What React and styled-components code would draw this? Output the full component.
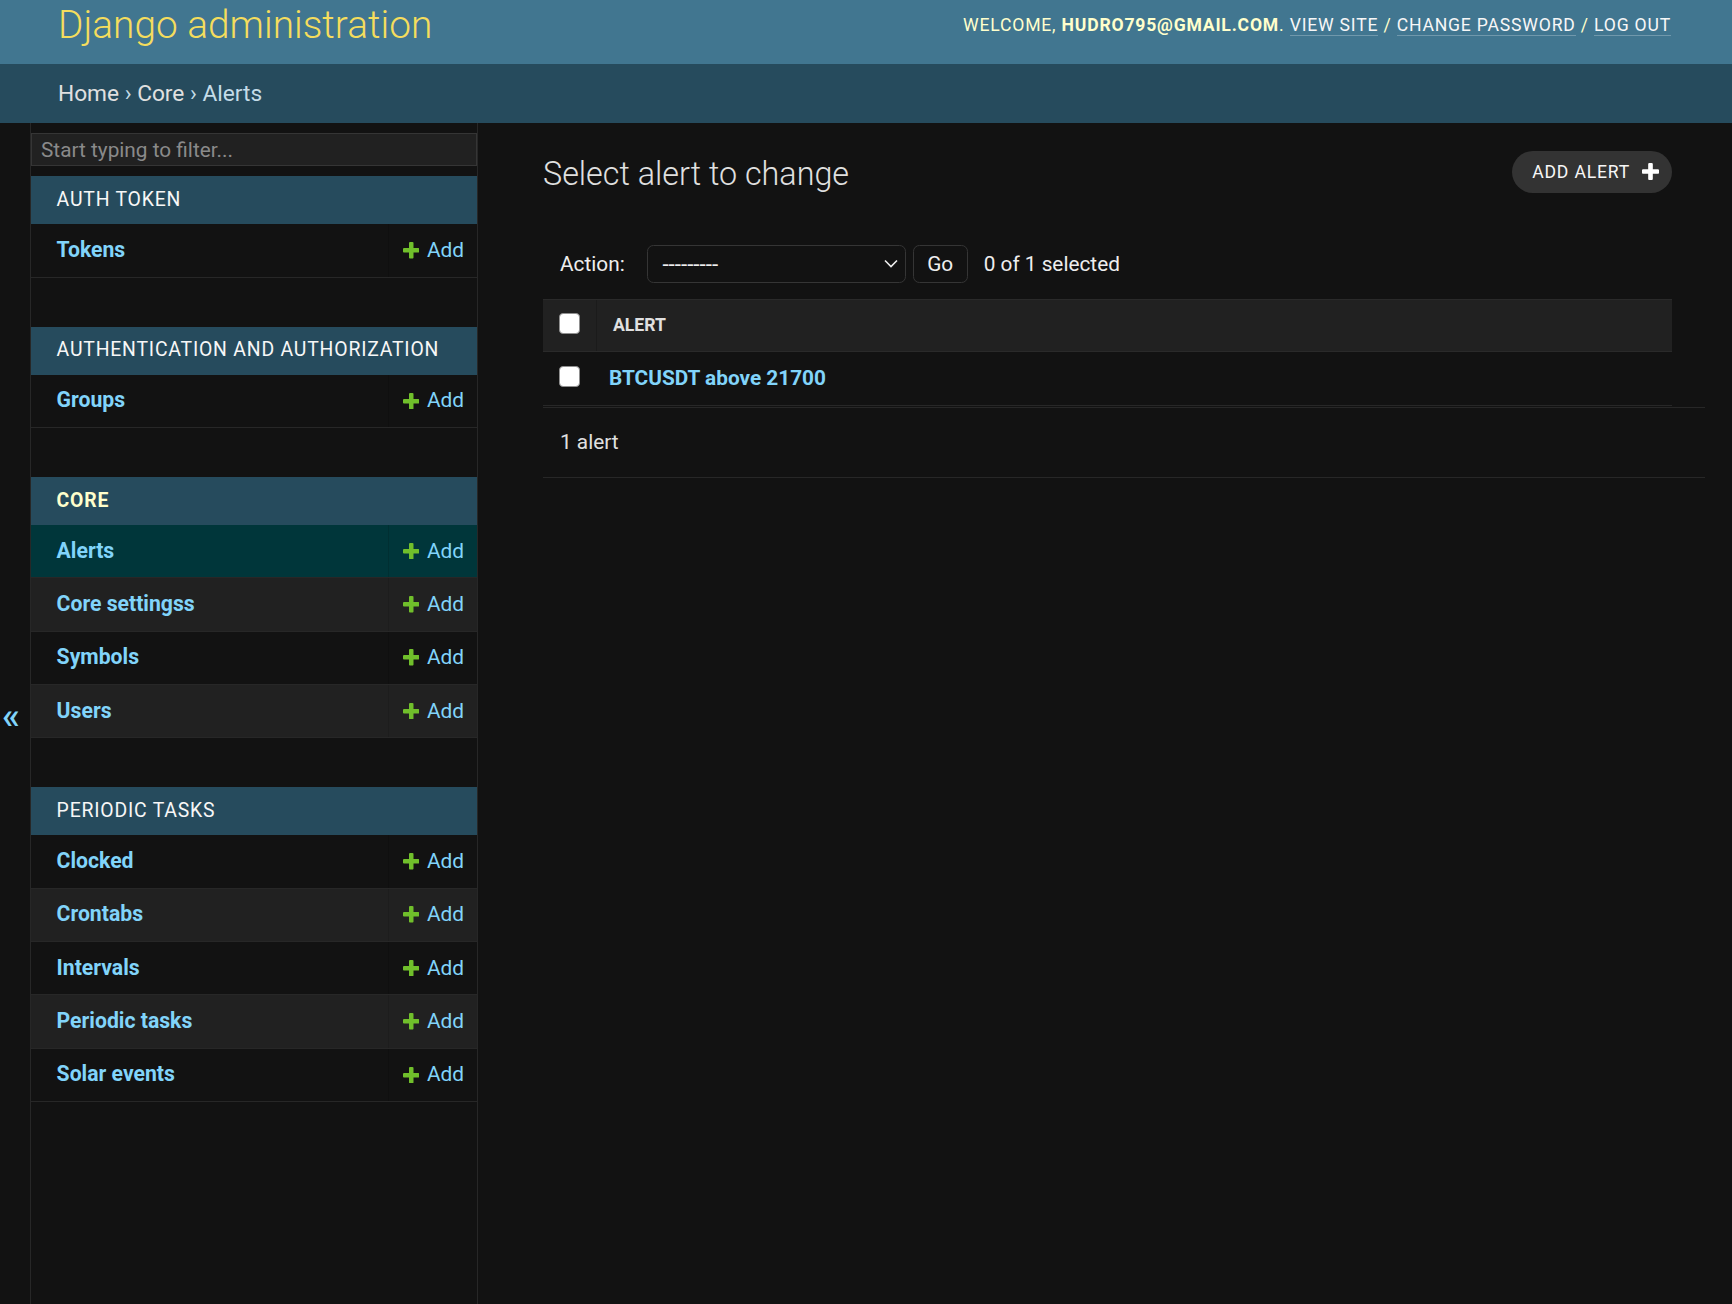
import React from 'react';
import styled, { createGlobalStyle } from 'styled-components';

const GlobalStyle = createGlobalStyle`
  html, body { margin: 0; padding: 0; background: #121212; }
  body {
    font-family: Roboto, "Liberation Sans", Arial, sans-serif;
    color: #eeeeee;
    -webkit-font-smoothing: antialiased;
  }
  *, *::before, *::after { box-sizing: border-box; }
  #root { min-height: 100vh; }
`;

const Page = styled.div`
  display: flex;
  flex-direction: column;
  min-height: 100vh;
`;

const Header = styled.header`
  display: flex;
  justify-content: space-between;
  align-items: flex-start;
  flex-shrink: 0;
  height: 64px;
  padding: 2px 61px 0 58px;
  background: #417690;
`;

const Branding = styled.h1`
  margin: 0;
  font-size: 38.8px;
  font-weight: 300;
  line-height: 45px;
  color: #f5dd5d;
  white-space: nowrap;
`;

const UserTools = styled.div`
  margin-top: 12.7px;
  font-size: 17.6px;
  line-height: 20.6px;
  letter-spacing: 0.8px;
  text-transform: uppercase;
  color: #ffffcc;
  white-space: nowrap;

  strong { font-weight: 700; }
`;

const UserLink = styled.a`
  color: #f7f7f7;
  text-decoration: none;
  border-bottom: 1px solid rgba(255, 255, 255, 0.25);
`;

const Breadcrumbs = styled.nav`
  display: flex;
  align-items: center;
  flex-shrink: 0;
  height: 59px;
  padding: 0 58px;
  background: #264b5d;
  color: #c4dce8;
  font-size: 22.7px;
  white-space: pre;
`;

const Crumb = styled.a`
  color: #e0e0e0;
  text-decoration: none;
`;

const Main = styled.div`
  display: flex;
  flex: 1;
`;

const Toggle = styled.button`
  flex: 0 0 31px;
  display: flex;
  align-items: center;
  justify-content: flex-start;
  padding: 4px 0 0 2px;
  border: 0;
  border-right: 1px solid #272727;
  background: #121212;
  color: #81d4fa;
  font-family: inherit;
  font-size: 37px;
  font-weight: 500;
  line-height: 1;
  cursor: pointer;
`;

const Sidebar = styled.nav`
  flex: 0 0 447px;
  padding-top: 10px;
  border-right: 1px solid #272727;
  background: #121212;
`;

const FilterInput = styled.input`
  display: block;
  width: 100%;
  height: 33.4px;
  margin: 0 0 10px;
  padding: 0 9px;
  border: 1px solid #353535;
  background: #212121;
  color: #eeeeee;
  font-family: inherit;
  font-size: 20.8px;
  outline: none;

  &::placeholder { color: #8a8a8a; }
`;

const Module = styled.section`
  margin-bottom: 48.8px;
`;

const Caption = styled.div`
  padding: 12.8px 25.6px;
  background: #264b5d;
  font-size: 19.4px;
  line-height: 22.4px;
  letter-spacing: 0.8px;
  text-transform: uppercase;
  white-space: nowrap;
  color: ${(p) => (p.$current ? '#ffffcc' : '#f7f7f7')};
  font-weight: ${(p) => (p.$current ? 700 : 400)};
`;

const ModelRow = styled.div`
  display: flex;
  height: 53.4px;
  border-bottom: 1px solid #272727;
  font-size: 20.8px;
  line-height: 26.8px;
  background: ${(p) => (p.$current ? '#00363a' : p.$even ? '#212121' : 'transparent')};
`;

const NameCell = styled.div`
  flex: 1;
  display: flex;
  align-items: center;
  padding-left: 25.6px;
`;

const ModelLink = styled.a`
  color: #81d4fa;
  font-size: 21.2px;
  font-weight: 700;
  text-decoration: none;
`;

const AddCell = styled.div`
  flex: 0 0 89px;
  display: flex;
  align-items: center;
  justify-content: flex-end;
  padding-right: 13px;
  border-left: 1px solid rgba(0, 0, 0, 0.12);
`;

const AddLink = styled.a`
  display: inline-flex;
  align-items: center;
  gap: 7.7px;
  color: #81d4fa;
  text-decoration: none;
`;

const Content = styled.main`
  flex: 1;
  min-width: 0;
  padding: 28px 60px 0 65px;
`;

const TitleRow = styled.div`
  display: flex;
  justify-content: space-between;
  align-items: flex-start;
`;

const Title = styled.h1`
  margin: 5px 0 0;
  font-size: 32.3px;
  font-weight: 300;
  line-height: 37.5px;
  color: #e0e0e0;
`;

const AddButton = styled.a`
  display: inline-flex;
  align-items: center;
  gap: 12px;
  height: 41.6px;
  padding: 0 13px 0 20px;
  border-radius: 21px;
  background: #333333;
  color: #f7f7f7;
  font-size: 17.6px;
  letter-spacing: 0.8px;
  text-transform: uppercase;
  text-decoration: none;
`;

const Actions = styled.div`
  display: flex;
  align-items: center;
  margin-top: 35px;
  padding: 16px 17px;
  font-size: 20.8px;
  color: #eeeeee;
`;

const ActionLabel = styled.label`
  margin-right: 22.7px;
`;

const SelectBox = styled.div`
  display: flex;
  align-items: center;
  justify-content: space-between;
  width: 259px;
  height: 38px;
  padding: 0 7px 0 14px;
  border: 1px solid #353535;
  border-radius: 6.4px;
  background: #121212;
  color: #eeeeee;
  font-size: 22.4px;
`;

const GoButton = styled.button`
  width: 55px;
  height: 38px;
  margin-left: 6.3px;
  padding: 0;
  border: 1px solid #353535;
  border-radius: 6.4px;
  background: #121212;
  color: #eeeeee;
  font-family: inherit;
  font-size: 20.8px;
`;

const SelectedCount = styled.span`
  margin-left: 16px;
`;

const HeadRow = styled.div`
  display: grid;
  grid-template-columns: 53px 1fr;
  height: 53px;
  border-top: 1px solid #2a2a2a;
  border-bottom: 1px solid #2a2a2a;
  background: #212121;
`;

const BodyRow = styled.div`
  display: grid;
  grid-template-columns: 53px 1fr;
  height: 54px;
  border-bottom: 1px solid #272727;
`;

const CheckCell = styled.div`
  display: flex;
  align-items: center;
  justify-content: center;
`;

const HeadLabel = styled.div`
  display: flex;
  align-items: center;
  padding-left: 16px;
  border-left: 1px solid #1b1b1b;
  font-size: 17.6px;
  font-weight: 700;
  text-transform: uppercase;
  color: #e0e0e0;
`;

const BodyCell = styled.div`
  display: flex;
  align-items: center;
  padding-left: 13px;
`;

const Checkbox = styled.span`
  display: block;
  width: 21px;
  height: 21px;
  margin-bottom: 4px;
  border: 1px solid #8f8f8f;
  border-radius: 4px;
  background: #ffffff;
`;

const ResultLink = styled.a`
  color: #81d4fa;
  font-size: 20.8px;
  font-weight: 700;
  text-decoration: none;
`;

const Paginator = styled.p`
  margin: 1px -33px 0 0;
  padding: 16px 17px;
  border-top: 1px solid #272727;
  border-bottom: 1px solid #272727;
  font-size: 20.8px;
  line-height: 37px;
  color: #e0e0e0;
`;

const PLUS_PATH =
  'M1600 736v192q0 40-28 68t-68 28h-416v416q0 40-28 68t-68 28h-192q-40 0-68-28t-28-68v-416h-416q-40 0-68-28t-28-68v-192q0-40 28-68t68-28h416v-416q0-40 28-68t68-28h192q40 0 68 28t28 68v416h416q40 0 68 28t28 68z';

const PlusIcon = ({ size, color }) => (
  <svg width={size} height={size} viewBox="192 128 1408 1408" aria-hidden="true">
    <path fill={color} d={PLUS_PATH} />
  </svg>
);

const Chevron = () => (
  <svg width="14" height="9" viewBox="0 0 14 9" aria-hidden="true">
    <polyline points="1,1.5 7,7.5 13,1.5" fill="none" stroke="#eeeeee" strokeWidth="1.6" />
  </svg>
);

const modules = [
  { name: 'Auth Token', models: ['Tokens'] },
  { name: 'Authentication and Authorization', models: ['Groups'] },
  { name: 'Core', current: true, models: ['Alerts', 'Core settingss', 'Symbols', 'Users'], currentModel: 'Alerts' },
  { name: 'Periodic Tasks', models: ['Clocked', 'Crontabs', 'Intervals', 'Periodic tasks', 'Solar events'] },
];

export default function App() {
  return (
    <Page>
      <GlobalStyle />
      <Header>
        <Branding>Django administration</Branding>
        <UserTools>
          Welcome, <strong>hudro795@gmail.com</strong>. <UserLink href="#">View site</UserLink> /{' '}
          <UserLink href="#">Change password</UserLink> / <UserLink href="#">Log out</UserLink>
        </UserTools>
      </Header>
      <Breadcrumbs>
        <Crumb href="#">Home</Crumb>
        {' › '}
        <Crumb href="#">Core</Crumb>
        {' › Alerts'}
      </Breadcrumbs>
      <Main>
        <Toggle aria-label="Toggle navigation">«</Toggle>
        <Sidebar>
          <FilterInput placeholder="Start typing to filter..." />
          {modules.map((m) => (
            <Module key={m.name}>
              <Caption $current={m.current}>{m.name}</Caption>
              {m.models.map((model, i) => (
                <ModelRow key={model} $even={i % 2 === 1} $current={model === m.currentModel}>
                  <NameCell>
                    <ModelLink href="#">{model}</ModelLink>
                  </NameCell>
                  <AddCell>
                    <AddLink href="#">
                      <PlusIcon size={16.5} color="#70bf2b" />
                      Add
                    </AddLink>
                  </AddCell>
                </ModelRow>
              ))}
            </Module>
          ))}
        </Sidebar>
        <Content>
          <TitleRow>
            <Title>Select alert to change</Title>
            <AddButton href="#">
              Add alert
              <PlusIcon size={17} color="#ffffff" />
            </AddButton>
          </TitleRow>
          <Actions>
            <ActionLabel>Action:</ActionLabel>
            <SelectBox>
              <span>---------</span>
              <Chevron />
            </SelectBox>
            <GoButton>Go</GoButton>
            <SelectedCount>0 of 1 selected</SelectedCount>
          </Actions>
          <HeadRow>
            <CheckCell>
              <Checkbox />
            </CheckCell>
            <HeadLabel>Alert</HeadLabel>
          </HeadRow>
          <BodyRow>
            <CheckCell>
              <Checkbox />
            </CheckCell>
            <BodyCell>
              <ResultLink href="#">BTCUSDT above 21700</ResultLink>
            </BodyCell>
          </BodyRow>
          <Paginator>1 alert</Paginator>
        </Content>
      </Main>
    </Page>
  );
}
